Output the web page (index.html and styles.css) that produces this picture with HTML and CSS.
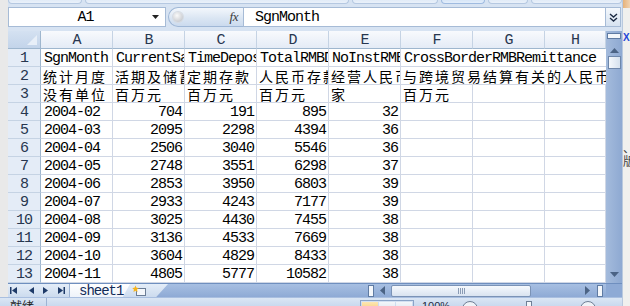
FILE: index.html
```html
<!DOCTYPE html>
<html lang="zh">
<head>
    <meta charset="UTF-8">
    <title>sheet1 - Excel</title>
    <link rel="stylesheet" href="styles.css">
</head>
<body>
    <div class="screen">
        <div class="excel">
            <div class="ribbon-edge">
                <span class="group g1"></span>
                <span class="group g2"></span>
                <span class="group g3"></span>
                <span class="group g4 active"></span>
                <span class="group g5"></span>
                <span class="group g6"></span>
            </div>

            <div class="formula-bar">
                <div class="name-box">
                    <span class="name">A1</span>
                    <svg class="drop" width="7" height="4" viewBox="0 0 7 4"><path d="M0 0h7L3.5 4z" fill="#222"/></svg>
                </div>
                <div class="fx-pill">
                    <span class="knob"></span>
                    <span class="fx">fx</span>
                </div>
                <div class="formula-input">SgnMonth</div>
                <div class="expand">
                    <svg width="9" height="9" viewBox="0 0 9 9">
                        <path d="M1 1l3.5 3 3.5-3M1 5l3.5 3 3.5-3" fill="none" stroke="#1d2c44" stroke-width="1.4"/>
                    </svg>
                </div>
            </div>

            <div class="sheet-area">
                <div class="sheet" id="sheet"></div>
                <div class="vscroll">
                    <span class="splitter-v"></span>
                    <svg class="arrow-up" width="9" height="5" viewBox="0 0 9 5"><path d="M0 5h9L4.5 0z" fill="#4b6385"/></svg>
                    <span class="thumb-v"></span>
                    <span class="track-v"></span>
                    <svg class="arrow-down" width="9" height="5" viewBox="0 0 9 5"><path d="M0 0h9L4.5 5z" fill="#4b6385"/></svg>
                </div>
            </div>

            <div class="tab-bar">
                <div class="tab-nav">
                    <svg width="58" height="9" viewBox="0 0 58 9">
                        <g fill="#1e3a68">
                            <rect x="2" y="1" width="1.5" height="7"/>
                            <path d="M9 1v7L4 4.5z"/>
                            <path d="M26 1v7L21 4.5z"/>
                            <path d="M35 1v7l5-3.5z"/>
                            <path d="M50 1v7l5-3.5z"/>
                            <rect x="55.5" y="1" width="1.5" height="7"/>
                        </g>
                    </svg>
                </div>
                <div class="tabs">
                    <div class="tab">sheet1</div>
                    <div class="tab-new">
                        <svg width="16" height="12" viewBox="0 0 16 12">
                            <rect x="4.5" y="3.5" width="9" height="7" fill="#f4f7fb" stroke="#6b7d96"/>
                            <path d="M3.5 0.5l1 2.2 2.3.3-1.7 1.6.4 2.3-2-1.1-2 1.1.4-2.3L0.2 3l2.3-.3z" fill="#f5b31c"/>
                        </svg>
                    </div>
                </div>
                <div class="tab-fill"></div>
                <div class="hscroll">
                    <span class="splitter-h"></span>
                    <svg width="5" height="9" viewBox="0 0 5 9"><path d="M5 0v9L0 4.5z" fill="#4b6385"/></svg>
                    <div class="thumb-h"><span class="grip"></span></div>
                    <svg width="5" height="9" viewBox="0 0 5 9"><path d="M0 0v9l5-4.5z" fill="#4b6385"/></svg>
                    <span class="splitter-h end"></span>
                </div>
                <div class="corner"></div>
            </div>

            <div class="status-bar">
                <span class="status-text">就绪</span>
                <span class="status-sep"></span>
                <span class="status-gap"></span>
                <span class="view-btns">
                    <span class="view on"></span><span class="view"></span><span class="view"></span>
                </span>
                <span class="zoom-text">100%</span>
                <span class="zoom-btn"></span>
                <span class="zoom-track"><span class="zoom-tick"></span></span>
                <span class="zoom-btn"></span>
            </div>
        </div>

        <div class="backdrop">
            <span class="bd-top"></span>
            <span class="bd-x">X</span>
            <span class="bd-char bd-dot">、</span>
            <span class="bd-char">版</span>
        </div>
    </div>

    <script>
        // Sheet contents, row by row (A..H)
        const COLUMNS = ['A', 'B', 'C', 'D', 'E', 'F', 'G', 'H'];

        const HEAD_ROWS = [
            ['SgnMonth', 'CurrentSavings', 'TimeDeposits', 'TotalRMBDeposits', 'NoInstRMBBusiness', 'CrossBorderRMBRemittance'],
            ['统计月度', '活期及储蓄存款', '定期存款', '人民币存款总额', '经营人民币业务机构数', '与跨境贸易结算有关的人民币汇款'],
            ['没有单位', '百万元', '百万元', '百万元', '家', '百万元', '', '']
        ];

        const DATA_ROWS = [
            ['2004-02', 704, 191, 895, 32],
            ['2004-03', 2095, 2298, 4394, 36],
            ['2004-04', 2506, 3040, 5546, 36],
            ['2004-05', 2748, 3551, 6298, 37],
            ['2004-06', 2853, 3950, 6803, 39],
            ['2004-07', 2933, 4243, 7177, 39],
            ['2004-08', 3025, 4430, 7455, 38],
            ['2004-09', 3136, 4533, 7669, 38],
            ['2004-10', 3604, 4829, 8433, 38],
            ['2004-11', 4805, 5777, 10582, 38]
        ];

        const sheet = document.getElementById('sheet');

        function addCell(text, className) {
            const el = document.createElement('div');
            el.className = className;
            if (text !== '' && text !== undefined) {
                const span = document.createElement('span');
                span.textContent = text;
                el.appendChild(span);
            }
            sheet.appendChild(el);
            return el;
        }

        const isCJK = s => /[\u3400-\u9fff]/.test(s);

        // column headers
        addCell('', 'corner-cell');
        COLUMNS.forEach(c => addCell(c, 'col-head'));

        let rowNo = 1;
        HEAD_ROWS.forEach(row => {
            addCell(rowNo++, 'row-head');
            row.forEach((text, i) => {
                let cls = 'cell';
                if (isCJK(text)) cls += ' cn';
                // last label spills over the empty G and H cells
                if (row.length === 6 && i === 5) cls += ' spill';
                addCell(text, cls);
            });
        });

        DATA_ROWS.forEach(row => {
            addCell(rowNo++, 'row-head');
            row.forEach((value, i) => addCell(value, i === 0 ? 'cell' : 'cell num'));
            for (let i = row.length; i < COLUMNS.length; i++) addCell('', 'cell');
        });
    </script>
</body>
</html>
```

FILE: styles.css
```css
body {
    margin: 0;
    background: #f3f3f3;
    font-family: "Liberation Mono", "DejaVu Sans Mono", monospace;
}

.screen {
    display: flex;
    width: 630px;
    height: 306px;
    overflow: hidden;
}

.excel {
    width: 623px;
    flex: none;
    display: flex;
    flex-direction: column;
    padding-left: 8px;
    box-sizing: border-box;
    background: #e9e9e9;
    border-right: 1px solid #b9c9de;
}

/* bottom of the ribbon */
.ribbon-edge {
    height: 7px;
    display: flex;
    gap: 3px;
    background: #d7e3f2;
    overflow: hidden;
}

.group {
    height: 5px;
    margin-top: -2px;
    border: 1px solid #b5c8e1;
    border-top: none;
    border-radius: 0 0 4px 4px;
    background: linear-gradient(#dbe7f5, #eaf1fa);
}
.g1 { width: 72px; }
.g2 { width: 262px; }
.g3 { width: 84px; }
.g4 { width: 42px; }
.g5 { width: 38px; }
.g6 { flex: 1; }
.group.active {
    background: linear-gradient(#cfe0f4, #e3eefb);
    border-color: #9fbbe0;
}

/* formula bar */
.formula-bar {
    display: flex;
    height: 20px;
    padding-bottom: 4px;
    background: #d7e3f2;
}

.name-box {
    width: 158px;
    display: flex;
    align-items: center;
    background: #fff;
    border: 1px solid #a6bbd6;
    box-sizing: border-box;
    margin-right: 2px;
}
.name {
    flex: 1;
    text-align: center;
    font-size: 15px;
    letter-spacing: -1px;
    padding-left: 10px;
}
.drop {
    margin-right: 6px;
}

.fx-pill {
    width: 75px;
    display: flex;
    align-items: center;
    justify-content: space-between;
    box-sizing: border-box;
    border: 1px solid #9fb7d6;
    border-right: none;
    border-radius: 10px 0 0 10px;
    background: linear-gradient(#f3f7fc, #dbe6f3 55%, #cbdaee);
    padding: 0 5px 0 4px;
}
.knob {
    width: 10px;
    height: 10px;
    border-radius: 50%;
    background: radial-gradient(circle at 40% 35%, #fafafa, #b9bcc2);
    box-shadow: 0 0 0 1px #d6dbe2;
}
.fx {
    font-family: "Liberation Serif", serif;
    font-style: italic;
    font-size: 13px;
    color: #3a3a3a;
    letter-spacing: -0.5px;
}

.formula-input {
    width: 363px;
    box-sizing: border-box;
    background: #fff;
    border: 1px solid #a6bbd6;
    padding: 1px 0 0 11px;
    font-size: 15px;
    letter-spacing: -1px;
    line-height: 17px;
}

.expand {
    width: 15px;
    display: flex;
    align-items: center;
    justify-content: center;
    box-sizing: border-box;
    border: 1px solid #a6bbd6;
    border-left: none;
    background: linear-gradient(#f4f8fc, #d7e3f1);
}

/* worksheet */
.sheet-area {
    display: flex;
    height: 252px;
}

.sheet {
    display: grid;
    grid-template-columns: 33px repeat(7, 72px) 61px;
    grid-template-rows: 18px;
    grid-auto-rows: 18px;
    width: 598px;
    background: #fff;
    overflow: hidden;
}

.corner-cell {
    background: linear-gradient(#d4e1f1, #c3d4ea);
    border-right: 1px solid #9eb6ce;
    border-bottom: 1px solid #9eb6ce;
    position: relative;
}
.corner-cell::after {
    content: "";
    position: absolute;
    right: 3px;
    bottom: 3px;
    border-left: 10px solid transparent;
    border-bottom: 10px solid #e8eff8;
}

.col-head,
.row-head {
    display: flex;
    align-items: center;
    justify-content: center;
    font-size: 15px;
    letter-spacing: -1px;
    color: #27364f;
    box-sizing: border-box;
}

.col-head {
    background: linear-gradient(#f8fafd, #e4ebf6);
    border-right: 1px solid #c5d3e4;
    border-bottom: 1px solid #9eb6ce;
    padding-top: 1px;
}

.row-head {
    background: #e4ecf7;
    border-right: 1px solid #9eb6ce;
    border-bottom: 1px solid #c5d3e4;
    padding-top: 2px;
}

.cell {
    display: flex;
    align-items: flex-end;
    box-sizing: border-box;
    border-right: 1px solid #d0d7e5;
    border-bottom: 1px solid #d0d7e5;
    overflow: hidden;
    white-space: nowrap;
    padding: 0 2px 0 3px;
    font-size: 15px;
    letter-spacing: -1px;
    line-height: 14px;
    color: #000;
}
.cell.num {
    justify-content: flex-end;
    padding-right: 2px;
}
.cell.cn {
    font-family: "Noto Sans CJK SC", sans-serif;
    font-size: 14px;
    letter-spacing: 2px;
    line-height: 15px;
    padding-left: 2px;
}
.cell.spill {
    grid-column: span 3;
    border-right: none;
}

/* vertical scrollbar */
.vscroll {
    width: 16px;
    display: flex;
    flex-direction: column;
    align-items: center;
    background: linear-gradient(90deg, #a4bbdc, #8ea9d2);
}
.splitter-v {
    width: 12px;
    height: 4px;
    margin-top: 2px;
    background: #f4f7fb;
    border: 1px solid #5f7ba3;
}
.arrow-up {
    margin-top: 9px;
}
.thumb-v {
    width: 13px;
    height: 13px;
    margin-top: 3px;
    box-sizing: border-box;
    border: 1px solid #6e87ab;
    background: linear-gradient(90deg, #f5f8fc, #d6e1ee);
}
.track-v {
    flex: 1;
}
.arrow-down {
    margin-bottom: 6px;
}

/* sheet tabs and horizontal scrollbar */
.tab-bar {
    display: flex;
    height: 14px;
    background: linear-gradient(#a7bfe2, #8eaad5);
    border-top: 1px solid #6f8fbf;
    box-sizing: border-box;
}

.tab-nav {
    width: 62px;
    display: flex;
    align-items: center;
    background: linear-gradient(#e4edf8, #ccdbee);
    border-right: 1px solid #9ab1d2;
    box-sizing: border-box;
}

.tabs {
    display: flex;
    width: 98px;
    background: linear-gradient(#e4edf8, #ccdbee);
    clip-path: polygon(0 0, 100% 0, 88% 100%, 0 100%);
}
.tab {
    width: 60px;
    padding-left: 9px;
    box-sizing: border-box;
    background: linear-gradient(#ffffff, #eef3fa);
    color: #112a57;
    font-size: 14px;
    letter-spacing: -1px;
    line-height: 14px;
    clip-path: polygon(0 0, 100% 0, 88% 100%, 0 100%);
}
.tab-new {
    width: 38px;
    display: flex;
    align-items: center;
    padding-left: 6px;
    box-sizing: border-box;
    margin-left: -4px;
}
.tab-fill {
    flex: 1;
}

.hscroll {
    width: 238px;
    display: flex;
    align-items: center;
    gap: 6px;
}
.splitter-h {
    width: 4px;
    height: 10px;
    background: #f4f7fb;
    border: 1px solid #5f7ba3;
}
.splitter-h.end {
    margin-left: 1px;
}
.thumb-h {
    width: 140px;
    height: 12px;
    box-sizing: border-box;
    border: 1px solid #7b93b6;
    border-radius: 2px;
    background: linear-gradient(#f6f9fd, #d9e3f0);
    display: flex;
    align-items: center;
    justify-content: center;
}
.grip {
    width: 7px;
    height: 6px;
    background: repeating-linear-gradient(90deg, #8a9bb4 0 1px, transparent 1px 2px);
}
.hscroll svg:last-of-type {
    margin-left: 48px;
}
.corner {
    width: 16px;
    background: #8eaad5;
}

/* status bar, only its top shows */
.status-bar {
    flex: 1;
    display: flex;
    align-items: flex-start;
    background: linear-gradient(#dbe6f4, #c9d9ee);
    border-top: 1px solid #a9bfe0;
    overflow: hidden;
    margin-left: -8px;
    padding-left: 10px;
}
.status-text {
    font-family: "Noto Sans CJK SC", sans-serif;
    font-size: 12px;
    line-height: 12px;
    margin-top: 2px;
    color: #1e1e1e;
    width: 36px;
}
.status-sep {
    width: 1px;
    height: 10px;
    background: #9db3d3;
}
.status-gap {
    width: 313px;
}
.view-btns {
    display: flex;
    gap: 1px;
    margin-top: 2px;
    border: 1px solid #8aa3c7;
    padding: 1px;
}
.view {
    width: 16px;
    height: 10px;
    background: linear-gradient(#f3f6fa, #d8e2ee);
}
.view.on {
    background: linear-gradient(#fde6b3, #f7c96d);
}
.zoom-text {
    font-family: "Liberation Sans", sans-serif;
    font-size: 11px;
    margin: 2px 0 0 8px;
    color: #1e2a40;
    width: 40px;
}
.zoom-btn {
    width: 14px;
    height: 14px;
    margin-top: 3px;
    border: 1px solid #6f7f96;
    border-radius: 50%;
    background: #eef2f7;
}
.zoom-track {
    width: 102px;
    display: flex;
    justify-content: center;
}
.zoom-tick {
    width: 4px;
    height: 8px;
    margin-top: 3px;
    border: 1px solid #6f7f96;
    background: #f3f6fa;
}

/* window behind */
.backdrop {
    flex: 1;
    display: flex;
    flex-direction: column;
    background: #f0f0ee;
}
.bd-top {
    height: 8px;
    background: linear-gradient(90deg, #e6b27a, #f7e9d8);
}
.bd-x {
    margin-top: 24px;
    font-family: "Liberation Sans", sans-serif;
    font-weight: bold;
    font-size: 10px;
    color: #2447d8;
}
.bd-char {
    font-family: "Noto Sans CJK SC", sans-serif;
    font-size: 12px;
    line-height: 13px;
    color: #444;
}
.bd-dot {
    margin-top: 98px;
}
```
